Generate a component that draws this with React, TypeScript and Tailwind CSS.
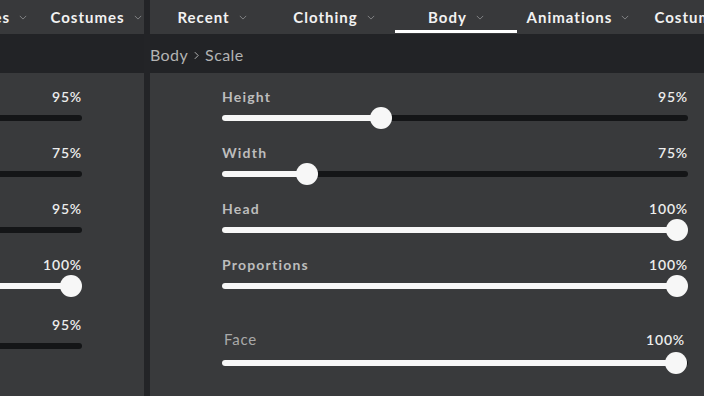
import React from "react";

const font = { fontFamily: "Lato, 'Open Sans', sans-serif" };

const Chevron: React.FC<{ className?: string }> = ({ className }) => (
  <svg viewBox="0 0 10 6" className={className ?? "w-[8px] h-[5px]"}>
    <polyline
      points="1,1 5,5 9,1"
      fill="none"
      stroke="#8a8b8d"
      strokeWidth="1.1"
    />
  </svg>
);

interface ITab {
  name: string;
  active?: boolean;
}

const Tab: React.FC<ITab> = ({ name, active }) => (
  <div className="relative w-[122px] h-full shrink-0 flex items-center justify-center gap-[9px]">
    <span className="text-[15px] font-bold tracking-[1px] text-[#f2f2f2]">
      {name}
    </span>
    <Chevron />
    {active && (
      <div className="absolute left-0 right-0 bottom-[1px] h-[3px] bg-white" />
    )}
  </div>
);

interface ISlider {
  label?: string;
  value: string;
  fill: number; // thumb center, px from track left
  thumb?: boolean;
  light?: boolean;
}

const Slider: React.FC<ISlider> = ({ label, value, fill, thumb = true, light }) => (
  <div className="flex flex-col">
    <div className="h-[20px] flex items-center justify-between">
      <span
        className={
          light
            ? "text-[15px] text-[#a9a9a9] tracking-[0.8px] pl-[2px]"
            : "text-[14px] font-bold text-[#bdbdbd] tracking-[1.2px]"
        }
      >
        {label}
      </span>
      <span
        className={`text-[14px] font-semibold text-[#ededed] tracking-[0.8px] ${
          light ? "pr-[3px]" : ""
        }`}
      >
        {value}
      </span>
    </div>
    <div className={`relative h-[22px] ${light ? "mt-[3px]" : "mt-[1px]"}`}>
      <div className="absolute left-0 right-0 top-[8px] h-[6px] rounded-full bg-[#141517]" />
      <div
        className="absolute left-0 top-[8px] h-[6px] rounded-full bg-[#f7f7f7]"
        style={{ width: fill }}
      />
      {thumb && (
        <div
          className="absolute top-0 w-[22px] h-[22px] rounded-full bg-[#f7f7f7]"
          style={{ left: fill - 11 }}
        />
      )}
    </div>
  </div>
);

const rightRows: ISlider[] = [
  { label: "Height", value: "95%", fill: 159 },
  { label: "Width", value: "75%", fill: 85 },
  { label: "Head", value: "100%", fill: 455 },
  { label: "Proportions", value: "100%", fill: 455 },
];

const leftRows: ISlider[] = [
  { value: "95%", fill: 0, thumb: false },
  { value: "75%", fill: 0, thumb: false },
  { value: "95%", fill: 0, thumb: false },
  { value: "100%", fill: 455 },
];

export default function App() {
  return (
    <div
      className="w-[704px] h-[396px] flex bg-[#232427] overflow-hidden"
      style={font}
    >
      {/* left panel */}
      <div className="w-[144px] shrink-0 flex flex-col overflow-hidden bg-[#393a3c]">
        <div className="h-[34px] shrink-0 flex bg-[#38393b] ml-[-87px]">
          <Tab name="Accessories" />
          <Tab name="Costumes" />
        </div>
        <div className="h-[39px] shrink-0 bg-[#222326]" />
        <div className="flex flex-col pt-[13px] gap-[13px] ml-[-384px] w-[466px]">
          {leftRows.map((r, i) => (
            <Slider key={i} {...r} />
          ))}
          <div className="mt-[4px]">
            <Slider value="95%" fill={0} thumb={false} />
          </div>
        </div>
      </div>

      <div className="w-[6px] shrink-0 bg-[#232427]" />

      {/* right panel */}
      <div className="flex-1 flex flex-col overflow-hidden bg-[#393a3c]">
        <div className="h-[34px] shrink-0 flex bg-[#38393b] pl-[1px]">
          <Tab name="Recent" />
          <Tab name="Clothing" />
          <Tab name="Body" active />
          <Tab name="Animations" />
          <Tab name="Costumes" />
        </div>
        <div className="h-[39px] shrink-0 flex items-center gap-[6px] bg-[#222326] pt-[3px] text-[16px] text-[#b3b3b3] tracking-[0.4px]">
          <span>Body</span>
          <svg viewBox="0 0 6 10" className="w-[5px] h-[9px]">
            <polyline
              points="1,1 5,5 1,9"
              fill="none"
              stroke="#b3b3b3"
              strokeWidth="1.2"
            />
          </svg>
          <span>Scale</span>
        </div>
        <div className="flex flex-col pt-[13px] pl-[72px] pr-[16px] gap-[13px]">
          {rightRows.map((r) => (
            <Slider key={r.label} {...r} />
          ))}
          <div className="mt-[19px]">
            <Slider label="Face" value="100%" fill={454} light />
          </div>
        </div>
      </div>
    </div>
  );
}
